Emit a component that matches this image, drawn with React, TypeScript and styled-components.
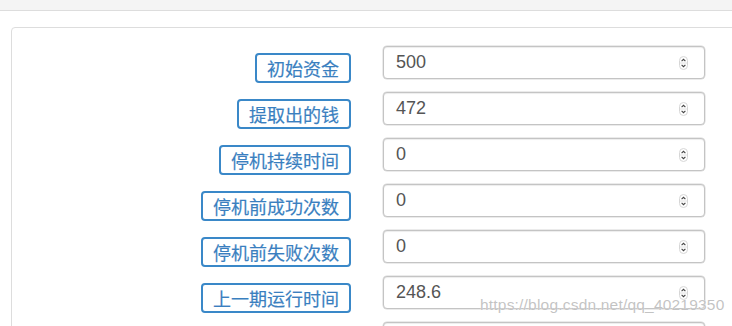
import { createGlobalStyle } from "styled-components";
import styled from "styled-components";

const GlobalStyle = createGlobalStyle`
  html, body {
    margin: 0;
    padding: 0;
    background: #ffffff;
    overflow: hidden;
  }
  body {
    font-family: "Liberation Sans", "Noto Sans CJK SC", sans-serif;
  }
`;

const FIELDS = [
  { label: "初始资金", value: "500" },
  { label: "提取出的钱", value: "472" },
  { label: "停机持续时间", value: "0" },
  { label: "停机前成功次数", value: "0" },
  { label: "停机前失败次数", value: "0" },
  { label: "上一期运行时间", value: "248.6" },
  { label: "", value: "" },
];

const SpinIcon = () => (
  <svg width="9" height="14" viewBox="0 0 9 14">
    <rect x="0.5" y="0.5" width="8" height="13" rx="4" fill="#fff" stroke="#d6d6d6" />
    <line x1="1" y1="7" x2="8" y2="7" stroke="#e2e2e2" />
    <path d="M2.6 5.2 L4.5 3.3 L6.4 5.2" fill="none" stroke="#444" strokeWidth="1.1" />
    <path d="M2.6 8.8 L4.5 10.7 L6.4 8.8" fill="none" stroke="#444" strokeWidth="1.1" />
  </svg>
);

const App = () => {
  return (
    <>
      <GlobalStyle />
      <Page>
        <TopBar />
        <Content>
          <Panel>
            <FormGrid>
              {FIELDS.map((f, i) => (
                <Row key={i}>
                  <LabelCell>{f.label && <Label>{f.label}</Label>}</LabelCell>
                  <NumberBox>
                    <Value>{f.value}</Value>
                    <SpinIcon />
                  </NumberBox>
                </Row>
              ))}
            </FormGrid>
          </Panel>
        </Content>
        <Watermark>https://blog.csdn.net/qq_40219350</Watermark>
      </Page>
    </>
  );
};

export default App;

const Page = styled.div`
  position: relative;
  width: 732px;
  height: 326px;
  overflow: hidden;
`;

const TopBar = styled.div`
  height: 10px;
  background: #f4f4f4;
  border-bottom: 1px solid #dddddd;
`;

const Content = styled.div`
  padding: 16px 0 0 11px;
`;

const Panel = styled.div`
  width: 760px;
  border: 1px solid #dddddd;
  border-radius: 4px;
  padding: 18px 0 20px 0;
`;

const FormGrid = styled.div`
  display: flex;
  flex-direction: column;
  gap: 9px;
`;

const Row = styled.div`
  display: grid;
  grid-template-columns: 339px 322px;
  column-gap: 32px;
  align-items: start;
`;

const LabelCell = styled.div`
  display: flex;
  justify-content: flex-end;
  align-items: flex-start;
  padding-top: 7px;
`;

const Label = styled.span`
  box-sizing: border-box;
  height: 30px;
  display: inline-flex;
  align-items: center;
  padding: 0 10px;
  border: 2px solid #3a88c8;
  border-radius: 4px;
  color: #3a7fbf;
  font-family: "Noto Sans CJK SC", sans-serif;
  font-size: 18px;
  line-height: 1;
  white-space: nowrap;
  -webkit-text-stroke: 0.2px #3a7fbf;
`;

const NumberBox = styled.div`
  box-sizing: border-box;
  height: 33px;
  display: flex;
  align-items: center;
  justify-content: space-between;
  padding: 0 16px 0 12px;
  border: 1px solid #c4c4c4;
  border-radius: 4px;
  box-shadow: inset 0 1px 1px rgba(0, 0, 0, 0.075), 0 0 0 0.5px #d8d8d8;
  background: #fff;
`;

const Value = styled.span`
  font-family: "Liberation Sans", sans-serif;
  font-size: 18px;
  color: #555555;
`;

const Watermark = styled.div`
  position: absolute;
  left: 480px;
  top: 296px;
  font-family: "Liberation Sans", sans-serif;
  font-size: 15.5px;
  color: rgba(185, 185, 185, 0.85);
  text-shadow: 0 0 1px #fff;
  white-space: nowrap;
  letter-spacing: 0.2px;
`;
